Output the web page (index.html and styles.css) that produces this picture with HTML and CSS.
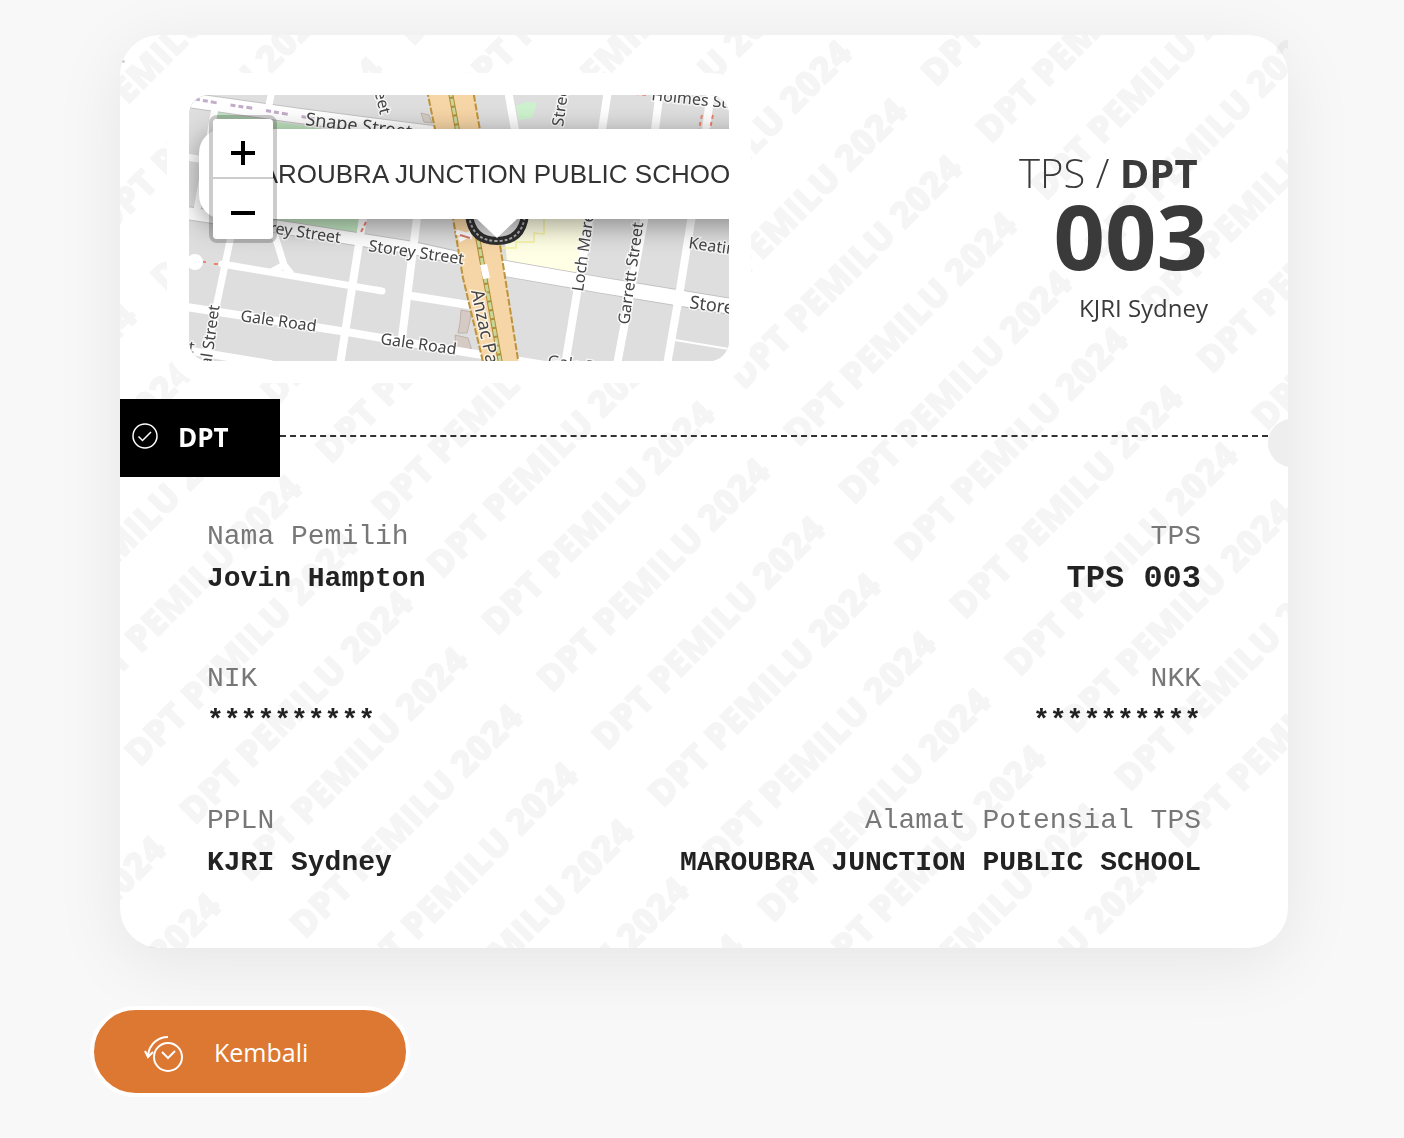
FILE: index.html
```html
<!DOCTYPE html>
<html lang="id">
<head>
<meta charset="utf-8">
<meta name="viewport" content="width=device-width, initial-scale=1">
<title>DPT Pemilu 2024</title>
<link rel="stylesheet" href="styles.css">
</head>
<body>
<main class="page">
  <article class="card">
    <svg class="watermark" aria-hidden="true">
      <defs>
        <text id="wm" class="watermark-text" transform="rotate(-45)">DPT PEMILU 2024</text>
        <g id="wm-column">
          <use href="#wm" x="0" y="0"/>
          <use href="#wm" x="55" y="57"/>
          <use href="#wm" x="110" y="115"/>
          <use href="#wm" x="165" y="172"/>
          <use href="#wm" x="221" y="230"/>
          <use href="#wm" x="276" y="287"/>
          <use href="#wm" x="331" y="344"/>
          <use href="#wm" x="386" y="402"/>
          <use href="#wm" x="442" y="459"/>
          <use href="#wm" x="497" y="517"/>
          <use href="#wm" x="552" y="574"/>
          <use href="#wm" x="607" y="631"/>
          <use href="#wm" x="662" y="689"/>
          <use href="#wm" x="718" y="746"/>
          <use href="#wm" x="773" y="804"/>
          <use href="#wm" x="828" y="861"/>
          <use href="#wm" x="883" y="918"/>
          <use href="#wm" x="938" y="976"/>
          <use href="#wm" x="994" y="1033"/>
        </g>
      </defs>
      <use href="#wm-column" x="-422" y="274"/>
      <use href="#wm-column" x="-175" y="28"/>
      <use href="#wm-column" x="72" y="-218"/>
      <use href="#wm-column" x="319" y="-464"/>
      <use href="#wm-column" x="566" y="-710"/>
      <use href="#wm-column" x="-669" y="520"/>
    </svg>
    <span class="speck"></span>

    <header class="summary">
      <div class="map-frame">
        <div class="map">
          <svg class="map-tiles" viewBox="189 95 540 266" preserveAspectRatio="xMidYMid slice" aria-hidden="true">
            <rect x="189" y="95" width="540" height="266" fill="#dedede"/>
            <path d="M217 112 368 136 358 236 205 215z" fill="#bfe3bf"/>
            <path d="M503 218h87l-15 56-68-12z" fill="#ffffe5"/>
            <path d="M544 218v16l-10-1v9h-18v6h-14" fill="none" stroke="#f7f3a0" stroke-width="1.5"/>
            <path d="M516 106l10-4 11 1-5 15-13 2z" fill="#cdf2cd"/>
            <g fill="#d5cbc4" stroke="#bfb3ab" stroke-width="1">
              <path d="M461 310l10 2-1 9-3 12h-9l2-10z"/>
              <path d="M455 335l13 3 5 16-17-4z"/>
              <path d="M421 113l8 2 3 8-8-1z"/>
            </g>
            <g fill="none" stroke="#c2c2c2" stroke-linecap="round">
              <path d="M180 99 300 116 440 134" stroke-width="16"/>
              <path d="M180 212 293 229 413 248 503 268 600 285 740 308" stroke-width="14"/>
              <path d="M480 263 503 268 600 285 740 308" stroke-width="17"/>
            </g>
            <g fill="none" stroke="#fff" stroke-linecap="round" stroke-linejoin="round">
              <path d="M180 99 300 116 440 134" stroke-width="14"/>
              <path d="M180 212 293 229 413 248 503 268" stroke-width="12"/>
              <path d="M485 265 600 285 740 308" stroke-width="15"/>
              <path d="M215 108 196 216M180 156 205 160M272 90 268 110" stroke-width="7"/>
              <path d="M231 236 204 365M222 264 382 291M275 236 284 265 273 271M291 274 284 265" stroke-width="7"/>
              <path d="M363 218 340 365M417 218 402 338M412 296 475 306" stroke-width="8"/>
              <path d="M180 306 347 332 470 353 570 369M180 349 270 364" stroke-width="8"/>
              <path d="M508 90 515 130M608 90 602 130M660 90 655 130M711 90 706 130" stroke-width="8"/>
              <path d="M590 215 565 365M645 215 617 365M692 215 679 296 667 365" stroke-width="8"/>
              <path d="M675 340 729 349" stroke-width="2"/>
              <circle cx="679" cy="298" r="5" stroke-width="8"/>
            </g>
            <circle cx="195" cy="262" r="8" fill="#fff"/>
            <path d="M203 262h3M214 264h4M702 115l-3 14M713 115l-3 14M635 94l12 1" stroke="#f2816b" stroke-width="2" stroke-dasharray="4 3"/>
            <path d="M366 222l-6 12" stroke="#ef7d6d" stroke-width="2" stroke-dasharray="4 3"/>
            <path d="M195 99l28 5 28 4 35 6 30 5" fill="none" stroke="#c3aeca" stroke-width="3" stroke-dasharray="5 3 5 3 6 14"/>
            <path d="M427 90 453 218 463 278 484 366H519L500 245 473 90z" fill="#f6d5a6" stroke="#bd9439" stroke-width="2" stroke-dasharray="7 2"/>
            <path d="M450 90 479 245 501 366" fill="none" stroke="#b08d38" stroke-width="5"/>
            <path d="M450 90 479 245 501 366" fill="none" stroke="#c6d797" stroke-width="3" stroke-dasharray="7 2"/>
            <path d="M480 265l7-1 3 14-7 1z" fill="#fff"/>
            <path d="M456 232l16 5M459 240l12-7" stroke="#fff" stroke-width="5"/>
            <path d="M460 235l10 3" stroke="#d87b70" stroke-width="2"/>
            <path d="M469 215Q472 241 497 241T525 215" fill="#d6d6d6" stroke="#2f2f2f" stroke-width="8"/>
            <path d="M469 215Q472 241 497 241T525 215" fill="none" stroke="#aaa" stroke-width="2" stroke-dasharray="3 2"/>
            <g class="map-labels">
              <text transform="translate(305 125) rotate(7)" class="map-label-main">Snape Street</text>
              <text transform="translate(374 90) rotate(76)" text-anchor="middle" x="14">eet</text>
              <text transform="translate(340 243) rotate(8)" text-anchor="end">Storey Street</text>
              <text transform="translate(368 251) rotate(8)">Storey Street</text>
              <text transform="translate(240 321) rotate(8)">Gale Road</text>
              <text transform="translate(380 344) rotate(8)">Gale Road</text>
              <text transform="translate(547 366) rotate(8)">Gale Road</text>
              <text transform="translate(211 367) rotate(-82)">al Street</text>
              <text transform="translate(471 291) rotate(78)" class="map-label-main">Anzac Parade</text>
              <text transform="translate(563 127) rotate(-82)">Street</text>
              <text transform="translate(651 100) rotate(6)">Holmes St.</text>
              <text transform="translate(583 292) rotate(-82)">Loch Maree</text>
              <text transform="translate(629 325) rotate(-82)">Garrett Street</text>
              <text transform="translate(688 248) rotate(8)">Keating</text>
              <text transform="translate(689 308) rotate(8)" class="map-label-main">Storey</text>
              <text transform="translate(188 352) rotate(8)">t</text>
            </g>
          </svg>
          <div class="popup">MAROUBRA JUNCTION PUBLIC SCHOOL</div>
          <span class="popup-tip"></span>
          <div class="zoom-control">
            <button type="button" class="zoom-button" aria-label="Zoom in"><svg viewBox="0 0 26 26" width="26" height="26"><path d="M1 13h24M13 1v24"/></svg></button>
            <button type="button" class="zoom-button" aria-label="Zoom out"><svg viewBox="0 0 26 26" width="26" height="26"><path d="M1 13h24"/></svg></button>
          </div>
        </div>
      </div>
      <div class="station">
        <p class="station-kind">TPS / <b>DPT</b>&nbsp;</p>
        <p class="station-number">003</p>
        <p class="station-place">KJRI Sydney</p>
      </div>
    </header>

    <div class="divider">
      <div class="badge">
        <svg class="badge-icon" viewBox="0 0 26 26" width="26" height="26" aria-hidden="true"><circle cx="13" cy="13" r="12"/><path d="M6.500 13.500l4 4 8.500-8.500"/></svg>
        <strong>DPT</strong>
      </div>
      <span class="dashes"></span>
      <span class="notch"><i class="notch-circle"></i></span>
    </div>

    <dl class="details">
      <div class="detail"><dt>Nama Pemilih</dt><dd>Jovin Hampton</dd></div>
      <div class="detail detail-end"><dt>TPS</dt><dd class="large">TPS 003</dd></div>
      <div class="detail"><dt>NIK</dt><dd>**********</dd></div>
      <div class="detail detail-end"><dt>NKK</dt><dd>**********</dd></div>
      <div class="detail"><dt>PPLN</dt><dd>KJRI Sydney</dd></div>
      <div class="detail detail-end"><dt>Alamat Potensial TPS</dt><dd>MAROUBRA JUNCTION PUBLIC SCHOOL</dd></div>
    </dl>
  </article>

  <button type="button" class="back">
    <svg class="back-icon" viewBox="0 0 40 38" width="40" height="38" aria-hidden="true"><circle cx="24" cy="22" r="14"/><path d="M18 17l6 6 7-7M24 2C14 2 5 9 4 21M1 16l3 6 5-5"/></svg>
    Kembali
  </button>
</main>
</body>
</html>
```
FILE: styles.css
```css
* {
  box-sizing: border-box;
}

body {
  margin: 0;
  background: #f8f8f8;
  color: #3a3a3a;
  font-family: "Open Sans", "Noto Sans", sans-serif;
}

p,
dl,
dd {
  margin: 0;
}

.page {
  padding: 35px 116px 41px 120px;
}

.card {
  position: relative;
  border-radius: 40px;
  background: #fff;
  box-shadow: 0 14px 70px rgba(0, 0, 0, 0.08);
}

.watermark {
  position: absolute;
  inset: 0;
  width: 100%;
  height: 100%;
  overflow: hidden;
  opacity: 0.04;
}

.watermark-text {
  fill: #000;
  stroke: #000;
  stroke-width: 1px;
  font-family: "Open Sans", sans-serif;
  font-size: 36px;
  font-weight: 800;
}

.speck {
  position: absolute;
  top: 25px;
  left: 2px;
  width: 3px;
  height: 3px;
  border-radius: 50%;
  background: #d0d0d0;
}

.summary {
  position: relative;
  display: flex;
  align-items: center;
  justify-content: space-between;
  padding: 38px 80px 16px 47px;
}

.map-frame {
  flex: 0 0 auto;
  width: 57%;
  max-width: 584px;
  padding: 22px;
  border-radius: 40px;
  background: #fff;
}

.map {
  position: relative;
  height: 266px;
  overflow: hidden;
  border-radius: 20px;
  background: #dedede;
}

.map-tiles {
  display: block;
  width: 100%;
  height: 100%;
}

.map-labels {
  fill: #444;
  stroke: rgba(255, 255, 255, 0.7);
  stroke-width: 3px;
  paint-order: stroke;
  font-family: "Noto Sans", sans-serif;
  font-size: 16px;
}

.map-label-main {
  font-size: 18px;
}

.popup {
  position: absolute;
  top: 34px;
  left: 10px;
  padding: 26px 48px 26px 40px;
  border-radius: 24px;
  background: #fff;
  box-shadow: 0 6px 28px rgba(0, 0, 0, 0.4);
  color: #333;
  font-family: "Liberation Sans", Arial, sans-serif;
  font-size: 26px;
  line-height: 38px;
  white-space: nowrap;
}

.popup-tip {
  position: absolute;
  top: 124px;
  left: 288px;
  border: solid transparent;
  border-width: 19px 20px 0;
  border-top-color: #fff;
}

.zoom-control {
  position: absolute;
  top: 20px;
  left: 20px;
  display: flex;
  flex-direction: column;
  border: 4px solid rgba(0, 0, 0, 0.2);
  border-radius: 8px;
  background-clip: padding-box;
}

.zoom-button {
  display: flex;
  align-items: center;
  justify-content: center;
  width: 60px;
  height: 60px;
  padding: 8px 0 0;
  border: 0;
  border-radius: 0 0 4px 4px;
  background: #fff;
}

.zoom-button:first-child {
  padding-top: 10px;
  border-bottom: 2px solid #ccc;
  border-radius: 4px 4px 0 0;
}

.zoom-button svg {
  fill: none;
  stroke: #000;
  stroke-width: 4px;
}

.station {
  margin-top: 36px;
  text-align: right;
}

.station-kind {
  font-size: 40px;
  font-weight: 300;
  line-height: 48px;
}

.station-kind b {
  font-weight: 700;
}

.station-number {
  font-size: 90px;
  font-weight: 700;
  line-height: 76px;
}

.station-place {
  font-size: 24px;
  line-height: 70px;
}

.divider {
  position: relative;
  display: flex;
  align-items: center;
}

.badge {
  display: flex;
  align-items: center;
  gap: 20px;
  width: 160px;
  height: 78px;
  padding: 0 12px 2px;
  background: #000;
  color: #fff;
  font-size: 26px;
}

.badge-icon {
  margin-bottom: 2px;
  fill: none;
  stroke: #fff;
  stroke-width: 1.5px;
}

.dashes {
  flex: 1;
  margin-bottom: 4px;
  border-top: 2px dashed #333;
}

.notch {
  width: 20px;
  height: 48px;
  margin-top: 10px;
  overflow: hidden;
}

.notch-circle {
  display: block;
  width: 48px;
  height: 48px;
  border-radius: 50%;
  background: #eee;
}

.details {
  position: relative;
  display: grid;
  grid-template-columns: 1fr auto;
  gap: 58px 24px;
  padding: 39px 87px 64px;
  font-family: "Courier New", "Liberation Mono", monospace;
  font-size: 28px;
  line-height: 42px;
}

.detail dt {
  color: #777;
}

.detail dd {
  color: #222;
  font-weight: 700;
}

.detail .large {
  font-size: 32px;
}

.detail-end {
  text-align: right;
}

.back {
  position: relative;
  display: flex;
  align-items: center;
  gap: 30px;
  width: 320px;
  height: 91px;
  margin: 58px 0 0 -30px;
  padding: 0 50px;
  border: 4px solid #fff;
  border-radius: 46px;
  background: #dd7833;
  color: #fff;
  font: 500 25px "Open Sans", sans-serif;
}

.back-icon {
  margin-top: 4px;
  fill: none;
  stroke: #fff;
  stroke-width: 2px;
}
```
